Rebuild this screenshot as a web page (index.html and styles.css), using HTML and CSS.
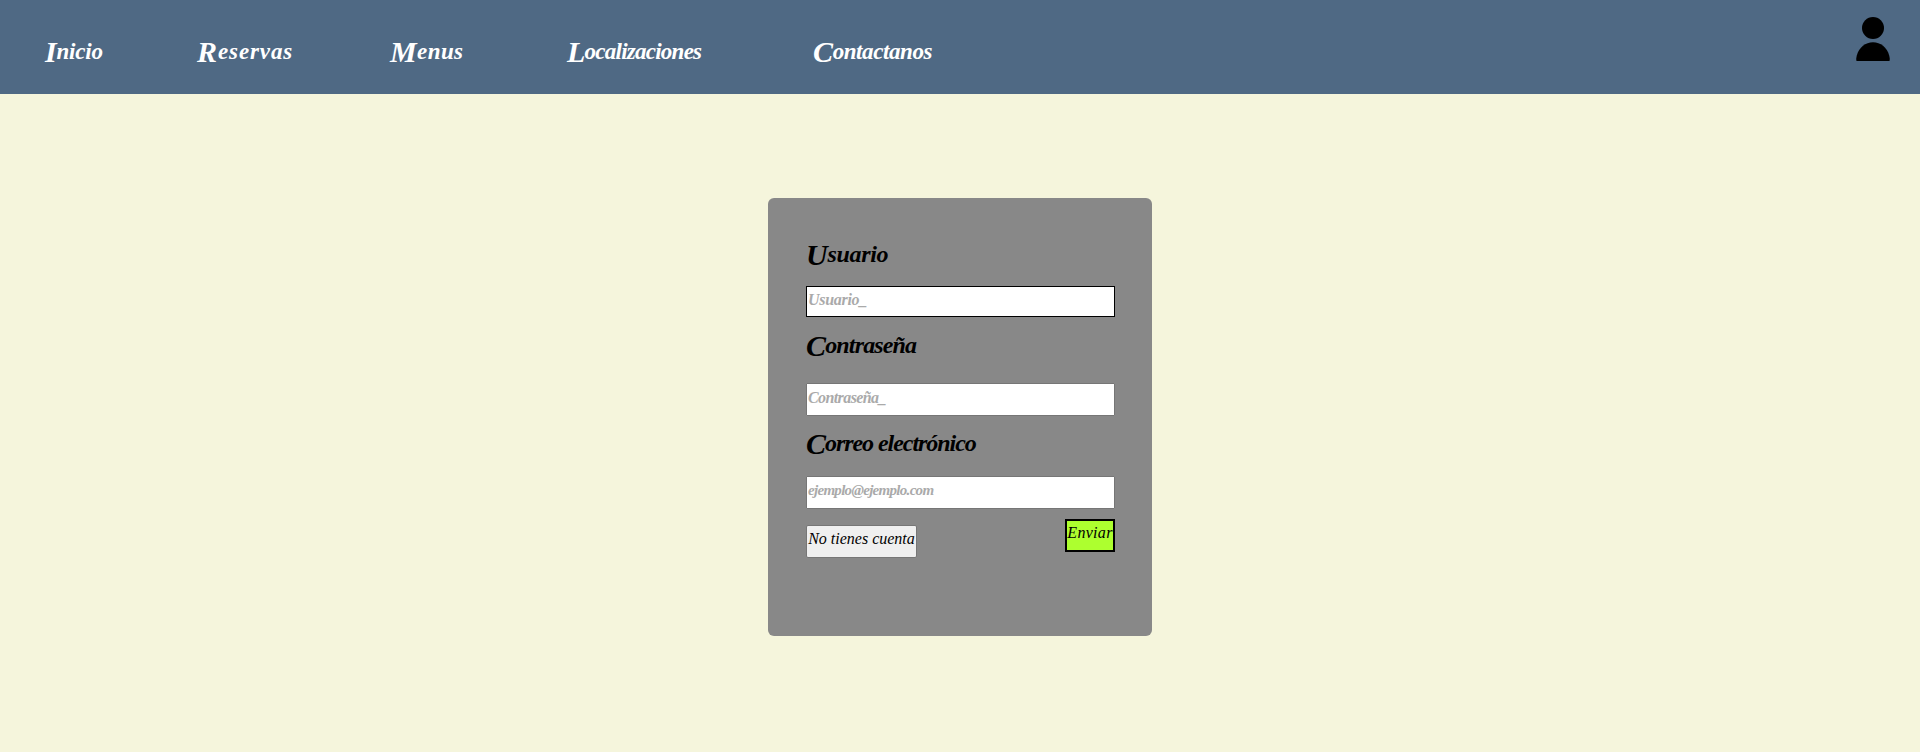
FILE: index.html
```html
<!DOCTYPE html>
<html lang="es">
<head>
<meta charset="utf-8">
<title>Registro</title>
<link rel="stylesheet" href="styles.css">
</head>
<body>
<header class="header">
  <nav class="nav">
    <a class="link inicio">Inicio</a>
    <a class="link reservas">Reservas</a>
    <a class="link menus">Menus</a>
    <a class="link localizaciones">Localizaciones</a>
    <a class="link contactanos">Contactanos</a>
  </nav>
  <svg class="user" width="34" height="44" viewBox="0 0 34 44"><circle cx="17" cy="11" r="11"/><path d="M0.500 44C0 42 0.300 40.500 0.800 38.500C3 30.500 9.500 25.300 17 25.300s14 5.200 16.200 13.200C33.700 40.500 34 42 33.500 44z"/></svg>
</header>
<main class="main">
  <form class="card">
    <label class="label" for="user">Usuario</label>
    <input class="field field-user" id="user" placeholder="Usuario_">
    <label class="label label-pass" for="pass">Contraseña</label>
    <input class="field field-pass" id="pass" type="password" placeholder="Contraseña_">
    <label class="label label-mail" for="mail">Correo electrónico</label>
    <input class="field field-mail" id="mail" type="email" placeholder="ejemplo@ejemplo.com">
    <div class="actions">
      <button class="button account" type="button">No tienes cuenta</button>
      <button class="button submit" type="button">Enviar</button>
    </div>
  </form>
</main>
</body>
</html>
```
FILE: styles.css
```css
* { box-sizing: border-box; }
body {
  margin: 0;
  min-height: 752px;
  background: #f5f5dc;
  font-family: "Liberation Serif", serif;
  font-style: italic;
}
.header {
  display: flex;
  justify-content: space-between;
  align-items: flex-start;
  height: 94px;
  padding: 17px 30px 0 45px;
  background: #4f6984;
}
.nav { display: flex; padding-top: 19px; }
.link {
  height: 32px;
  color: #fff;
  font-size: 23px;
  font-weight: bold;
  line-height: 32px;
  white-space: nowrap;
}
/* Dropped, swash-sized capitals */
.link::first-letter,
.label::first-letter {
  font-size: 30px;
  line-height: 1px;
  vertical-align: -3px;
}
.inicio { width: 152px; letter-spacing: -0.2px; }
.reservas { width: 193px; letter-spacing: 0.9px; }
.menus { width: 177px; letter-spacing: 0.4px; }
.localizaciones { width: 246px; letter-spacing: -0.75px; }
.contactanos { letter-spacing: -0.4px; }
.user { display: block; }
.main { display: flex; justify-content: center; padding-top: 104px; }
.card {
  display: flex;
  flex-direction: column;
  width: 384px;
  height: 438px;
  padding: 40px 37px 0 38px;
  border-radius: 6px;
  background: #888;
}
.label {
  height: 32px;
  font-size: 24px;
  font-weight: bold;
  line-height: 32px;
  letter-spacing: -0.3px;
  white-space: nowrap;
}
.label-pass { margin-top: 12px; letter-spacing: -0.85px; }
.label-mail { margin-top: 11px; letter-spacing: -1.05px; }
.field {
  width: 309px;
  border: 1px solid #767676;
  border-radius: 1px;
  outline: none;
  background: #fff;
  font: italic bold 16px "Liberation Serif", serif;
}
.field::placeholder { color: #aaa; opacity: 1; }
.field-user {
  height: 31px;
  margin-top: 16px;
  padding: 0 1px 4px;
  border-color: #000;
  border-radius: 0;
  letter-spacing: -0.3px;
}
.field-pass { height: 33px; margin-top: 22px; padding: 0 1px 4px; letter-spacing: -0.6px; }
.field-mail { height: 33px; margin-top: 17px; padding: 0 1px 4px; font-size: 15px; letter-spacing: -0.7px; }
.actions { display: flex; justify-content: space-between; padding-top: 10px; }
.button {
  height: 33px;
  color: #000;
  font: italic 16px "Liberation Serif", serif;
  white-space: nowrap;
}
.account {
  width: 111px;
  margin-top: 6px;
  padding: 0 1px 5px;
  border: 1px solid #767676;
  border-radius: 2px;
  background: #efefef;
}
.submit {
  width: 50px;
  padding: 0 0 5px;
  border: 2px solid #000;
  background: greenyellow;
  letter-spacing: 0.3px;
}
```
